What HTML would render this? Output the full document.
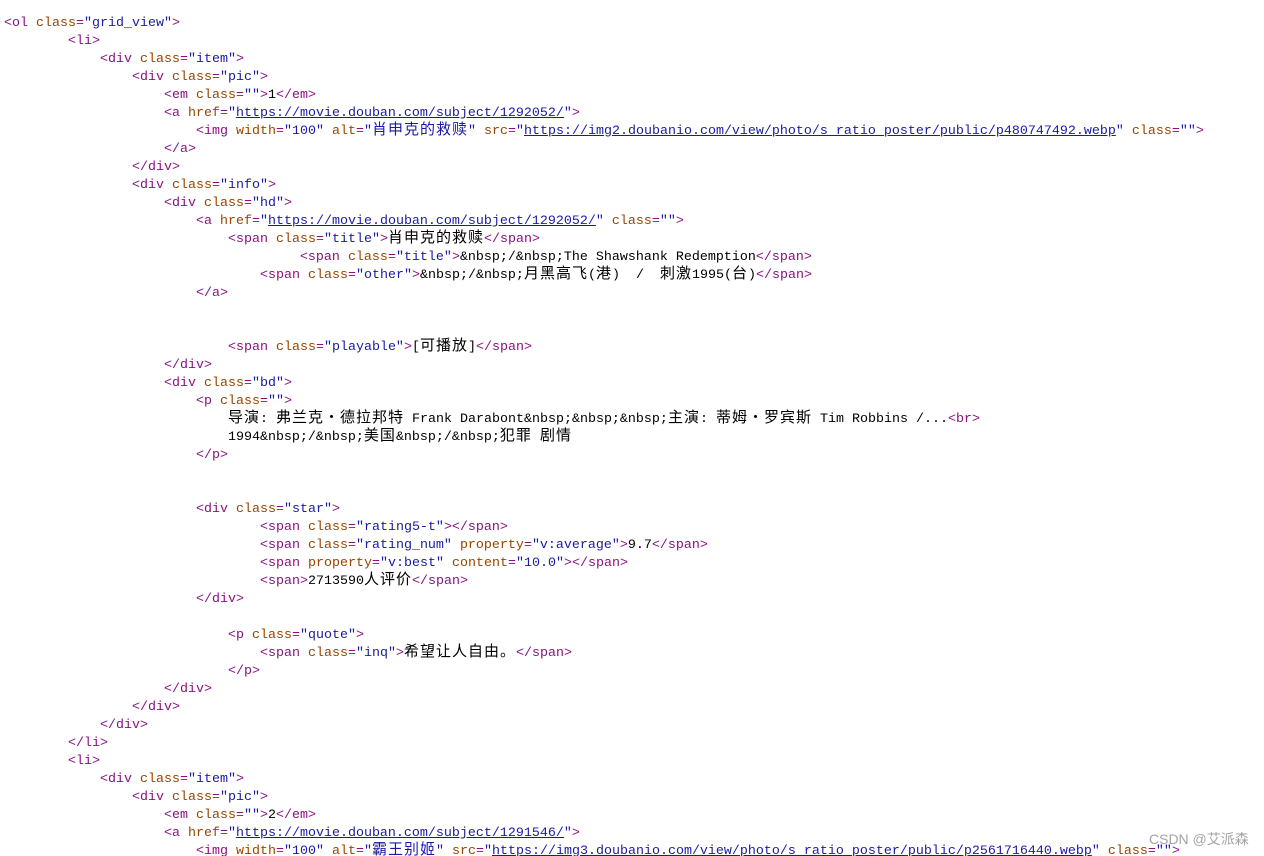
<!DOCTYPE html>
<html><head><meta charset="utf-8"><style>
html,body{margin:0;padding:0;background:#fff;width:1264px;height:856px;overflow:hidden}
pre{margin:0;padding:15px 0 0 4px;font-family:"Liberation Mono",monospace;font-size:13.33px;line-height:18px;color:#000;white-space:pre}
.t{color:#881280}.n{color:#994500}.v{color:#1a1aa6}
u{color:#1a1aa6}
i{font-style:normal;font-size:15px;letter-spacing:1px;font-family:"Noto Sans CJK SC","WenQuanYi Zen Hei",sans-serif;display:inline-block;height:18px;line-height:18px;vertical-align:top;position:relative;top:-3px}
.wm{position:absolute;left:1149px;top:829px;font-family:"Liberation Sans","Noto Sans CJK SC",sans-serif;font-size:14px;color:#9a9a9a;opacity:.9}
</style></head><body><pre><span class="t">&lt;ol</span> <span class="n">class</span><span class="t">=</span><span class="v">"grid_view"</span><span class="t">&gt;</span>
        <span class="t">&lt;li&gt;</span>
            <span class="t">&lt;div</span> <span class="n">class</span><span class="t">=</span><span class="v">"item"</span><span class="t">&gt;</span>
                <span class="t">&lt;div</span> <span class="n">class</span><span class="t">=</span><span class="v">"pic"</span><span class="t">&gt;</span>
                    <span class="t">&lt;em</span> <span class="n">class</span><span class="t">=</span><span class="v">""</span><span class="t">&gt;</span>1<span class="t">&lt;/em&gt;</span>
                    <span class="t">&lt;a</span> <span class="n">href</span><span class="t">=</span><span class="v">"<u>https://movie.douban.com/subject/1292052/</u>"</span><span class="t">&gt;</span>
                        <span class="t">&lt;img</span> <span class="n">width</span><span class="t">=</span><span class="v">"100"</span> <span class="n">alt</span><span class="t">=</span><span class="v">"<i>肖申克的救赎</i>"</span> <span class="n">src</span><span class="t">=</span><span class="v">"<u>https://img2.doubanio.com/view/photo/s_ratio_poster/public/p480747492.webp</u>"</span> <span class="n">class</span><span class="t">=</span><span class="v">""</span><span class="t">&gt;</span>
                    <span class="t">&lt;/a&gt;</span>
                <span class="t">&lt;/div&gt;</span>
                <span class="t">&lt;div</span> <span class="n">class</span><span class="t">=</span><span class="v">"info"</span><span class="t">&gt;</span>
                    <span class="t">&lt;div</span> <span class="n">class</span><span class="t">=</span><span class="v">"hd"</span><span class="t">&gt;</span>
                        <span class="t">&lt;a</span> <span class="n">href</span><span class="t">=</span><span class="v">"<u>https://movie.douban.com/subject/1292052/</u>"</span> <span class="n">class</span><span class="t">=</span><span class="v">""</span><span class="t">&gt;</span>
                            <span class="t">&lt;span</span> <span class="n">class</span><span class="t">=</span><span class="v">"title"</span><span class="t">&gt;</span><i>肖申克的救赎</i><span class="t">&lt;/span&gt;</span>
                                     <span class="t">&lt;span</span> <span class="n">class</span><span class="t">=</span><span class="v">"title"</span><span class="t">&gt;</span>&amp;nbsp;/&amp;nbsp;The Shawshank Redemption<span class="t">&lt;/span&gt;</span>
                                <span class="t">&lt;span</span> <span class="n">class</span><span class="t">=</span><span class="v">"other"</span><span class="t">&gt;</span>&amp;nbsp;/&amp;nbsp;<i>月黑高飞</i>(<i>港</i>)  /  <i>刺激</i>1995(<i>台</i>)<span class="t">&lt;/span&gt;</span>
                        <span class="t">&lt;/a&gt;</span>


                            <span class="t">&lt;span</span> <span class="n">class</span><span class="t">=</span><span class="v">"playable"</span><span class="t">&gt;</span>[<i>可播放</i>]<span class="t">&lt;/span&gt;</span>
                    <span class="t">&lt;/div&gt;</span>
                    <span class="t">&lt;div</span> <span class="n">class</span><span class="t">=</span><span class="v">"bd"</span><span class="t">&gt;</span>
                        <span class="t">&lt;p</span> <span class="n">class</span><span class="t">=</span><span class="v">""</span><span class="t">&gt;</span>
                            <i>导演</i>: <i>弗兰克・德拉邦特</i> Frank Darabont&amp;nbsp;&amp;nbsp;&amp;nbsp;<i>主演</i>: <i>蒂姆・罗宾斯</i> Tim Robbins /...<span class="t">&lt;br&gt;</span>
                            1994&amp;nbsp;/&amp;nbsp;<i>美国</i>&amp;nbsp;/&amp;nbsp;<i>犯罪</i> <i>剧情</i>
                        <span class="t">&lt;/p&gt;</span>


                        <span class="t">&lt;div</span> <span class="n">class</span><span class="t">=</span><span class="v">"star"</span><span class="t">&gt;</span>
                                <span class="t">&lt;span</span> <span class="n">class</span><span class="t">=</span><span class="v">"rating5-t"</span><span class="t">&gt;&lt;/span&gt;</span>
                                <span class="t">&lt;span</span> <span class="n">class</span><span class="t">=</span><span class="v">"rating_num"</span> <span class="n">property</span><span class="t">=</span><span class="v">"v:average"</span><span class="t">&gt;</span>9.7<span class="t">&lt;/span&gt;</span>
                                <span class="t">&lt;span</span> <span class="n">property</span><span class="t">=</span><span class="v">"v:best"</span> <span class="n">content</span><span class="t">=</span><span class="v">"10.0"</span><span class="t">&gt;&lt;/span&gt;</span>
                                <span class="t">&lt;span&gt;</span>2713590<i>人评价</i><span class="t">&lt;/span&gt;</span>
                        <span class="t">&lt;/div&gt;</span>

                            <span class="t">&lt;p</span> <span class="n">class</span><span class="t">=</span><span class="v">"quote"</span><span class="t">&gt;</span>
                                <span class="t">&lt;span</span> <span class="n">class</span><span class="t">=</span><span class="v">"inq"</span><span class="t">&gt;</span><i>希望让人自由。</i><span class="t">&lt;/span&gt;</span>
                            <span class="t">&lt;/p&gt;</span>
                    <span class="t">&lt;/div&gt;</span>
                <span class="t">&lt;/div&gt;</span>
            <span class="t">&lt;/div&gt;</span>
        <span class="t">&lt;/li&gt;</span>
        <span class="t">&lt;li&gt;</span>
            <span class="t">&lt;div</span> <span class="n">class</span><span class="t">=</span><span class="v">"item"</span><span class="t">&gt;</span>
                <span class="t">&lt;div</span> <span class="n">class</span><span class="t">=</span><span class="v">"pic"</span><span class="t">&gt;</span>
                    <span class="t">&lt;em</span> <span class="n">class</span><span class="t">=</span><span class="v">""</span><span class="t">&gt;</span>2<span class="t">&lt;/em&gt;</span>
                    <span class="t">&lt;a</span> <span class="n">href</span><span class="t">=</span><span class="v">"<u>https://movie.douban.com/subject/1291546/</u>"</span><span class="t">&gt;</span>
                        <span class="t">&lt;img</span> <span class="n">width</span><span class="t">=</span><span class="v">"100"</span> <span class="n">alt</span><span class="t">=</span><span class="v">"<i>霸王别姬</i>"</span> <span class="n">src</span><span class="t">=</span><span class="v">"<u>https://img3.doubanio.com/view/photo/s_ratio_poster/public/p2561716440.webp</u>"</span> <span class="n">class</span><span class="t">=</span><span class="v">""</span><span class="t">&gt;</span>
</pre><div class="wm">CSDN @艾派森</div></body></html>
